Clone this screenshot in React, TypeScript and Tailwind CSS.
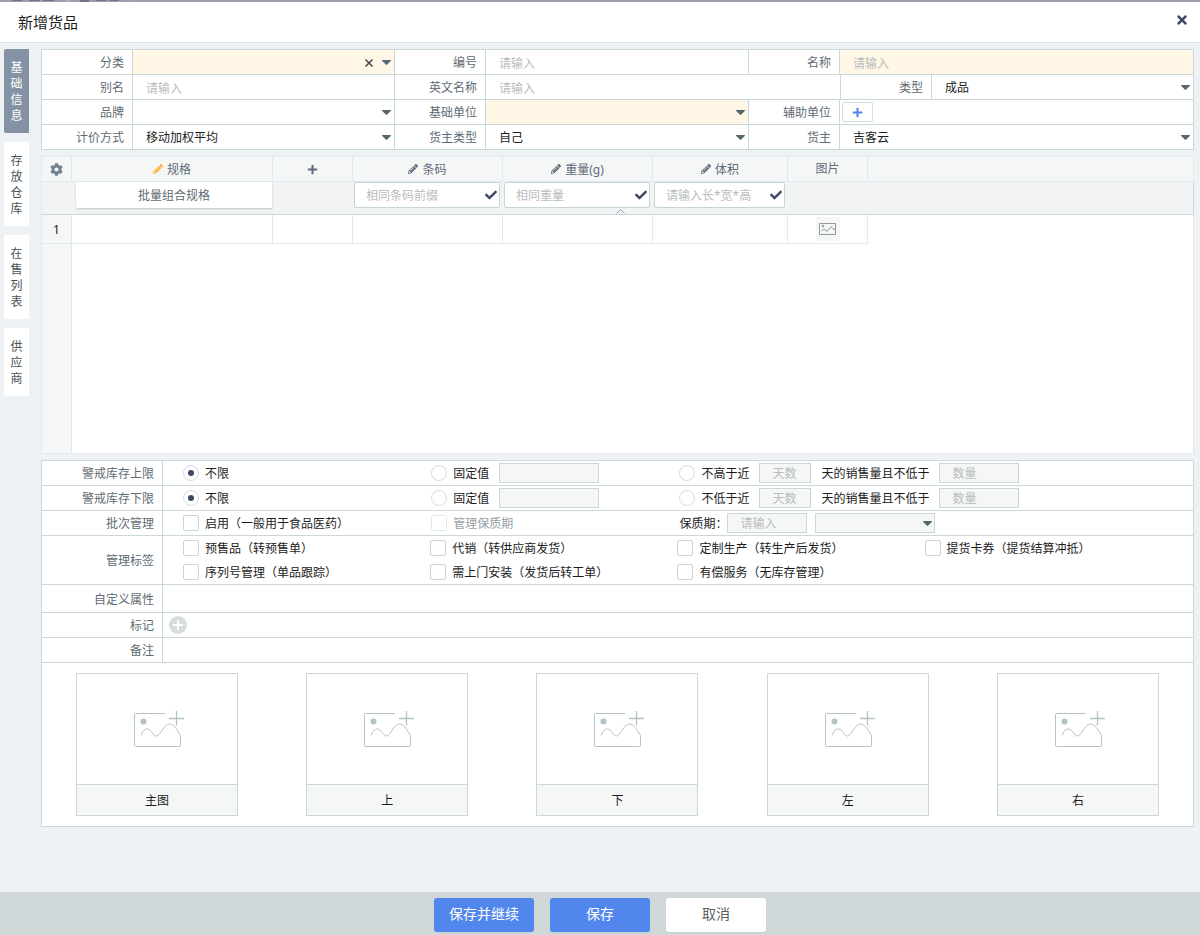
import { useState } from 'react';
import type { ReactNode } from 'react';
import { FaCheck, FaCog, FaPencilAlt, FaPlus, FaTimes } from 'react-icons/fa';

const sideTabs = ['基础信息', '存放仓库', '在售列表', '供应商'];

const imageSlots = ['主图', '上', '下', '左', '右'];

const tagOptions = [
  '预售品（转预售单）',
  '代销（转供应商发货）',
  '定制生产（转生产后发货）',
  '提货卡券（提货结算冲抵）',
  '序列号管理（单品跟踪）',
  '需上门安装（发货后转工单）',
  '有偿服务（无库存管理）',
];

const stockLimits = [
  { id: 'upper', label: '警戒库存上限', recent: '不高于近' },
  { id: 'lower', label: '警戒库存下限', recent: '不低于近' },
];

const radioClass =
  'grid size-4 shrink-0 appearance-none place-items-center rounded-full border border-[#d6dbe8] bg-white checked:before:size-[6px] checked:before:rounded-full checked:before:bg-[#3d4863]';
const checkboxClass =
  'size-4 shrink-0 appearance-none rounded-[2px] border border-[#c8d4d8] bg-white checked:bg-[#5186ec] disabled:border-[#e4e9ea]';
const smallInputClass =
  'h-5 shrink-0 border border-[#cbd8da] bg-[#f5f7f7] px-3 outline-none placeholder:text-[#b8bcbe]';

function Arrow() {
  return (
    <svg className="pointer-events-none absolute top-1/2 right-[3px] -mt-[2px] h-[5px] w-[9px]" viewBox="0 0 9 5">
      <path d="M0.6 0h7.8c.6 0 .8.6.4 1L5.2 4.6a1 1 0 0 1-1.4 0L.2 1C-.2.6 0 0 .6 0z" fill="#56676f" />
    </svg>
  );
}

function Field({ id, label, required, children }: { id?: string; label: string; required?: boolean; children: ReactNode }) {
  return (
    <div className="flex h-6 min-w-0 border-r border-[#cbd8da] last:border-r-0">
      <label htmlFor={id} className="w-[91px] shrink-0 border-r border-[#cbd8da] pr-2 text-right leading-[26px] text-[#5f6b73]">
        {label}
      </label>
      <div className={`relative flex min-w-0 flex-1 items-center ${required ? 'bg-[#fff6e6]' : ''}`}>{children}</div>
    </div>
  );
}

function TextInput({ id }: { id: string }) {
  return (
    <input
      id={id}
      type="text"
      placeholder="请输入"
      className="h-full w-full bg-transparent px-[13px] pt-[3px] outline-none placeholder:text-[#b8bcbe]"
    />
  );
}

function SelectInput({ id, value }: { id: string; value: string }) {
  return (
    <>
      <select id={id} className="h-full w-full appearance-none bg-transparent pt-[2px] pr-6 pl-[13px] outline-none">
        <option>{value}</option>
      </select>
      <Arrow />
    </>
  );
}

function Option({ type, name, text, checked, disabled }: { type: 'radio' | 'checkbox'; name?: string; text: string; checked?: boolean; disabled?: boolean }) {
  return (
    <label className={`flex items-center gap-[6px] whitespace-nowrap ${disabled ? 'text-[#97a1a6]' : ''}`}>
      <input
        type={type}
        name={name}
        defaultChecked={checked}
        disabled={disabled}
        className={type === 'radio' ? radioClass : checkboxClass}
      />
      <span className="pt-[2px]">{text}</span>
    </label>
  );
}

function BatchInput({ label, placeholder }: { label: string; placeholder: string }) {
  return (
    <div className="mr-[3px] ml-px flex h-[26px] items-center rounded-[2px] border border-[#c6d5d8] bg-white pr-[2px]">
      <input
        type="text"
        aria-label={label}
        placeholder={placeholder}
        className="h-full w-full min-w-0 flex-1 pt-px pl-[11px] outline-none placeholder:text-[#b8bcbe]"
      />
      <button type="button" aria-label={`应用${label}`} className="text-[#3d4863]">
        <FaCheck size={12} />
      </button>
    </div>
  );
}

function DetailRow({ label, className, children }: { label: string; className: string; children?: ReactNode }) {
  return (
    <div className={`flex border-b border-[#cbd8da] ${className}`}>
      <div className="flex w-[121px] shrink-0 items-center justify-end border-r border-[#cbd8da] pt-[2px] pr-2 text-[#5f6b73]">
        {label}
      </div>
      <div className="flex min-w-0 flex-1 items-center">{children}</div>
    </div>
  );
}

function AddImageIcon() {
  return (
    <svg width="52" height="38" viewBox="0 0 52 38" fill="none" stroke="#b4c3c7" className="ml-[6px]">
      <path d="M31 3.5H1.5a1 1 0 0 0-1 1v31a1 1 0 0 0 1 1h44a1 1 0 0 0 1-1V25.5C42 18 39.5 14 35.500 14c-6 0-9 12-13 12-3.500 0-5-7-9-7-3.500 0-5 3-6.500 6.500" />
      <path d="M42.500 1v14.500M35 8.500h15" strokeWidth="1.300" />
      <circle cx="9.500" cy="11.500" r="3" fill="#b4c3c7" stroke="none" />
    </svg>
  );
}

export default function App() {
  const [activeTab, setActiveTab] = useState(0);

  return (
    <div className="flex min-h-screen flex-col bg-[#eef2f4] font-['Noto_Sans','Noto_Sans_CJK_SC',sans-serif] text-[12px] leading-4 text-[#1c1c1c]">
      <div className="h-[2px] bg-[#9c9ea9]">
        <svg className="block" width="132" height="2">
          <path d="M12 0h10v1h-10zM29 0h11v1h-11zM43 0h11v1h-11zM80 0h9v2h-9zM96 0h10v1h-10zM109 0h10v1h-10z" fill="#70748a" />
          <path d="M66 0h3v2h-3zM130 0h1v2h-1z" fill="#adafb8" />
        </svg>
      </div>

      {/* Header */}
      <header className="flex h-[41px] items-center justify-between border-b border-[#d8e1e3] bg-white pr-[11px] pl-[18px]">
        <h1 className="text-[15px] leading-5">新增货品</h1>
        <button type="button" aria-label="关闭" className="-mt-1 text-[#3d4863]">
          <FaTimes size={14} />
        </button>
      </header>

      <div className="flex flex-1 items-start gap-3 pt-[6px] pr-[6px] pb-4 pl-1">
        {/* Side tabs */}
        <nav className="flex w-[25px] shrink-0 flex-col gap-[9px]">
          {sideTabs.map((tab, i) => (
            <button
              key={tab}
              type="button"
              onClick={() => setActiveTab(i)}
              className={`rounded-l-[2px] px-[6px] pt-[11px] pb-[9px] break-all ${
                i === activeTab ? 'bg-[#8592a3] text-white' : 'bg-white text-[#4b5357]'
              }`}
            >
              {tab}
            </button>
          ))}
        </nav>

        <main className="min-w-0 flex-1">
          {/* Basic info */}
          <section className="divide-y divide-[#cbd8da] border border-[#cbd8da] bg-white">
            <div className="grid grid-cols-[353fr_354fr_444fr]">
              <Field id="category" label="分类" required>
                <SelectInput id="category" value="" />
                <button type="button" aria-label="清除" className="absolute top-2 right-5">
                  <svg width="10" height="10" viewBox="0 0 10 10" stroke="#3f4a55" strokeWidth="1.5">
                    <path d="M1.500 1.500l7 7M8.500 1.500l-7 7" />
                  </svg>
                </button>
              </Field>
              <Field id="code" label="编号">
                <TextInput id="code" />
              </Field>
              <Field id="name" label="名称" required>
                <TextInput id="name" />
              </Field>
            </div>
            <div className="grid grid-cols-[353fr_446fr_352fr]">
              <Field id="alias" label="别名">
                <TextInput id="alias" />
              </Field>
              <Field id="english-name" label="英文名称">
                <TextInput id="english-name" />
              </Field>
              <Field id="type" label="类型">
                <SelectInput id="type" value="成品" />
              </Field>
            </div>
            <div className="grid grid-cols-[353fr_354fr_444fr]">
              <Field id="brand" label="品牌">
                <SelectInput id="brand" value="" />
              </Field>
              <Field id="base-unit" label="基础单位" required>
                <SelectInput id="base-unit" value="" />
              </Field>
              <Field id="aux-unit" label="辅助单位">
                <button
                  id="aux-unit"
                  type="button"
                  className="ml-[2px] flex h-5 w-[31px] items-center justify-center rounded-[2px] border border-[#d5dee0] bg-white text-[#5186ec]"
                >
                  <FaPlus size={11} />
                </button>
              </Field>
            </div>
            <div className="grid grid-cols-[353fr_354fr_444fr]">
              <Field id="pricing" label="计价方式">
                <SelectInput id="pricing" value="移动加权平均" />
              </Field>
              <Field id="owner-type" label="货主类型">
                <SelectInput id="owner-type" value="自己" />
              </Field>
              <Field id="owner" label="货主">
                <SelectInput id="owner" value="吉客云" />
              </Field>
            </div>
          </section>

          {/* Spec table */}
          <section className="relative mt-[6px] border-t border-l border-[#e0e8f1] bg-white">
            <table className="w-full table-fixed border-separate border-spacing-0 [&_td]:p-0 [&_th]:p-0 [&_th]:font-normal">
              <colgroup>
                <col className="w-[30px]" />
                <col className="w-[201px]" />
                <col className="w-[80px]" />
                <col className="w-[150px]" />
                <col className="w-[150px]" />
                <col className="w-[135px]" />
                <col className="w-[80px]" />
                <col />
              </colgroup>
              <thead>
                <tr className="h-[25px] bg-[#f5f7f7] text-[#5f6b7a] [&>th]:border-r [&>th]:border-b [&>th]:border-[#e0e8f1]">
                  <th>
                    <button type="button" aria-label="列设置" className="block w-full text-[#71838f]">
                      <FaCog size={13} className="mx-auto" />
                    </button>
                  </th>
                  <th>
                    <span className="flex items-center justify-center gap-1">
                      <FaPencilAlt size={10} className="text-[#ffad33]" />
                      <span className="pt-px">规格</span>
                    </span>
                  </th>
                  <th>
                    <button type="button" aria-label="添加规格" className="block w-full">
                      <FaPlus size={11} className="mx-auto" />
                    </button>
                  </th>
                  {['条码', '重量(g)', '体积'].map((title) => (
                    <th key={title}>
                      <span className="flex items-center justify-center gap-1">
                        <FaPencilAlt size={10} />
                        <span className="pt-px">{title}</span>
                      </span>
                    </th>
                  ))}
                  <th>图片</th>
                  <th />
                </tr>
                <tr className="h-[33px] bg-[#f1f3f5] align-top [&>td]:border-b [&>td]:border-[#cbd8da]">
                  <td />
                  <td className="pr-px! pl-1!">
                    <button type="button" className="block h-[26px] w-full rounded-l-[2px] bg-white pt-[2px] text-[#5f6b73] shadow-[0_1px_2px_rgba(0,0,0,0.2)]">
                      批量组合规格
                    </button>
                  </td>
                  <td />
                  <td>
                    <BatchInput label="条码" placeholder="相同条码前缀" />
                  </td>
                  <td>
                    <BatchInput label="重量" placeholder="相同重量" />
                  </td>
                  <td>
                    <BatchInput label="体积" placeholder="请输入长*宽*高" />
                  </td>
                  <td />
                  <td className="border-r" />
                </tr>
              </thead>
              <tbody>
                <tr className="h-[29px] [&>td]:border-r [&>td]:border-b [&>td]:border-[#e0e8f1]">
                  <td className="bg-[#f5f7f7] pt-[2px]! text-center">1</td>
                  <td />
                  <td />
                  <td />
                  <td />
                  <td />
                  <td>
                    <button type="button" aria-label="上传图片" className="mx-auto flex size-6 items-center justify-center bg-[#f5f7f7]">
                      <svg width="17" height="12" viewBox="0 0 17 12" fill="none" stroke="#949b9d">
                        <path d="M.5.5h16v11H.5zM2.500 8l2.500-2 3 2.500 4-5L15 7l1.500-2" />
                        <circle cx="4" cy="3" r="1.200" fill="#949b9d" stroke="none" />
                      </svg>
                    </button>
                  </td>
                  <td className="border-b-0!" />
                </tr>
                <tr className="h-[210px] [&>td]:border-r [&>td]:border-b [&>td]:border-[#e0e8f1]">
                  <td className="bg-[#f5f7f7]" />
                  <td colSpan={7} />
                </tr>
              </tbody>
            </table>
            <button type="button" aria-label="收起" className="absolute top-[52px] left-1/2 -translate-x-[2px]">
              <svg width="9" height="5" viewBox="0 0 9 5" fill="none" stroke="#8fa0a6">
                <path d="M.5 4.500l4-4 4 4" />
              </svg>
            </button>
          </section>

          {/* Stock settings */}
          <section className="mt-[6px] border border-[#cbd8da] bg-white">
            {stockLimits.map((limit) => (
              <DetailRow key={limit.id} label={limit.label} className="h-[25px]">
                <div className="w-[24.1%] shrink-0 pl-5">
                  <Option type="radio" name={limit.id} text="不限" checked />
                </div>
                <div className="flex w-[24.1%] shrink-0 items-center gap-[10px] pl-5">
                  <Option type="radio" name={limit.id} text="固定值" />
                  <input type="text" aria-label={`${limit.label}固定值`} disabled className={`${smallInputClass} w-[100px]`} />
                </div>
                <div className="flex items-center gap-[10px] pl-5 whitespace-nowrap">
                  <Option type="radio" name={limit.id} text={limit.recent} />
                  <input type="text" aria-label={`${limit.label}天数`} placeholder="天数" disabled className={`${smallInputClass} w-[52px]`} />
                  <span className="pt-[2px]">天的销售量且不低于</span>
                  <input type="text" aria-label={`${limit.label}数量`} placeholder="数量" disabled className={`${smallInputClass} w-20`} />
                </div>
              </DetailRow>
            ))}
            <DetailRow label="批次管理" className="h-[25px]">
              <div className="w-[24.1%] shrink-0 pl-5">
                <Option type="checkbox" text="启用（一般用于食品医药）" />
              </div>
              <div className="w-[24.1%] shrink-0 pl-5">
                <Option type="checkbox" text="管理保质期" disabled />
              </div>
              <div className="flex items-center pl-5">
                <label htmlFor="shelf-life" className="pt-[2px]">
                  保质期：
                </label>
                <input id="shelf-life" type="text" placeholder="请输入" disabled className={`${smallInputClass} w-20`} />
                <div className="relative ml-2">
                  <select aria-label="保质期单位" disabled className="block h-5 w-[120px] appearance-none border border-[#cbd8da] bg-[#f5f7f7]">
                    <option></option>
                  </select>
                  <Arrow />
                </div>
              </div>
            </DetailRow>
            <DetailRow label="管理标签" className="h-[49px]">
              <div className="flex w-full flex-wrap">
                {tagOptions.map((tag) => (
                  <div key={tag} className="flex h-6 w-[24%] items-center pl-5">
                    <Option type="checkbox" text={tag} />
                  </div>
                ))}
              </div>
            </DetailRow>
            <DetailRow label="自定义属性" className="h-7" />
            <DetailRow label="标记" className="h-[25px]">
              <button type="button" aria-label="添加标记" className="ml-[6px]">
                <svg width="18" height="18" viewBox="0 0 18 18">
                  <circle cx="9" cy="9" r="9" fill="#d8dedf" />
                  <path d="M9 4v10M4 9h10" stroke="#fff" strokeWidth="2" />
                </svg>
              </button>
            </DetailRow>
            <DetailRow label="备注" className="h-[25px]">
              <input type="text" aria-label="备注" className="h-full w-full px-[13px] outline-none" />
            </DetailRow>

            {/* Images */}
            <div className="grid grid-cols-5 py-[10px]">
              {imageSlots.map((slot) => (
                <button key={slot} type="button" className="mx-auto block w-[162px] border border-[#cbd8da]">
                  <span className="flex h-[110px] items-center justify-center">
                    <AddImageIcon />
                  </span>
                  <span className="block h-[31px] border-t border-[#cbd8da] bg-[#f5f7f7] leading-8">{slot}</span>
                </button>
              ))}
            </div>
          </section>
        </main>
      </div>

      {/* Actions */}
      <footer className="flex h-[43px] items-center justify-center gap-4 bg-[#d0d8da] pt-[3px] text-[14px]">
        <button type="button" className="h-[34px] w-[100px] rounded-[3px] bg-[#5186ec] pb-[2px] text-white shadow-xs">
          保存并继续
        </button>
        <button type="button" className="h-[34px] w-[100px] rounded-[3px] bg-[#5186ec] pb-[2px] text-white shadow-xs">
          保存
        </button>
        <button type="button" className="h-[34px] w-[100px] rounded-[3px] bg-white pb-[2px] text-[#5c5f61] shadow-xs">
          取消
        </button>
      </footer>
    </div>
  );
}
